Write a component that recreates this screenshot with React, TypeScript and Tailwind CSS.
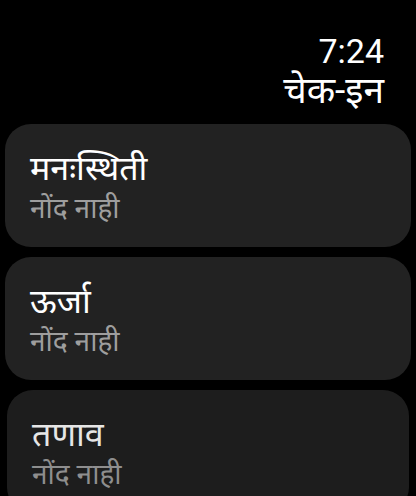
const cards = [
  { title: "मनःस्थिती", sub: "नोंद नाही" },
  { title: "ऊर्जा", sub: "नोंद नाही" },
  { title: "तणाव", sub: "नोंद नाही" },
];

export default function App() {
  return (
    <div
      className="w-[416px] h-[496px] overflow-hidden bg-black text-white"
      style={{ fontFamily: 'Roboto, "Noto Sans", "Noto Sans Devanagari", sans-serif' }}
    >
      <header className="flex flex-col items-end pr-[32px] pt-[33px]">
        <div className="text-[34px] leading-[36px]">7:24</div>
        <h1 className="text-[37px] leading-[44px]">चेक-इन</h1>
      </header>
      <main className="mt-[11px] flex flex-col gap-[10px] px-[5px]">
        {cards.map((c, i) => (
          <div
            key={c.title}
            className={
              i === 2
                ? "mx-[2px] h-[123px] rounded-[26px] bg-[#212121] px-[25px] pt-[20px] opacity-90"
                : "h-[123px] rounded-[26px] bg-[#222222] px-[25px] pt-[20px]"
            }
          >
            <div className="text-[34px] leading-[48px]">{c.title}</div>
            <div className="text-[28px] leading-[34px] text-[#9e9e9e]">{c.sub}</div>
          </div>
        ))}
      </main>
    </div>
  );
}
